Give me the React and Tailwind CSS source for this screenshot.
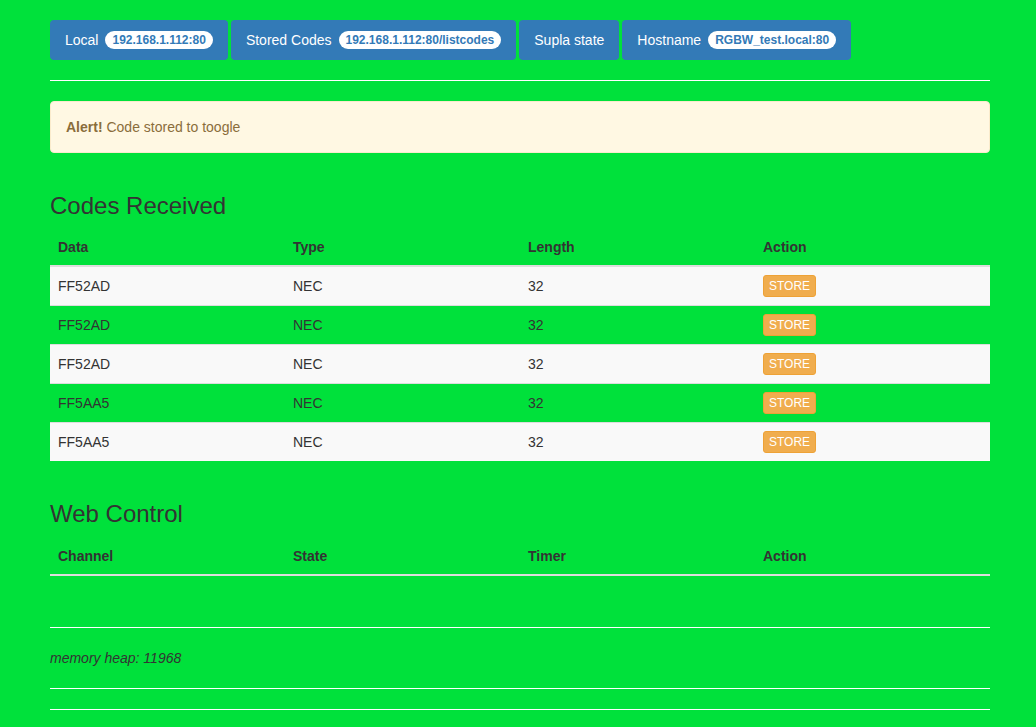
const links = [
  { label: "Local", badge: "192.168.1.112:80" },
  { label: "Stored Codes", badge: "192.168.1.112:80/listcodes" },
  { label: "Supla state" },
  { label: "Hostname", badge: "RGBW_test.local:80" },
];

const codes = [
  { data: "FF52AD", type: "NEC", len: 32 },
  { data: "FF52AD", type: "NEC", len: 32 },
  { data: "FF52AD", type: "NEC", len: 32 },
  { data: "FF5AA5", type: "NEC", len: 32 },
  { data: "FF5AA5", type: "NEC", len: 32 },
];

function Head({ cols }) {
  return (
    <thead>
      <tr>
        {cols.map((c) => (
          <th key={c} className="w-1/4 text-left font-bold px-2 py-2 leading-5 border-b-2 border-[#ddd]">
            {c}
          </th>
        ))}
      </tr>
    </thead>
  );
}

export default function App() {
  return (
    <div className="min-h-[727px] bg-[#00e13b] text-[#333] text-[14px] leading-5" style={{ fontFamily: '"Liberation Sans", Arial, sans-serif' }}>
      <div className="w-[940px] ml-[50px] pt-5 pb-5">
        <ul className="flex gap-[3px]">
          {links.map((l) => (
            <li key={l.label}>
              <a className="flex items-center gap-[7px] h-10 px-[15px] rounded bg-[#337ab7] text-white">
                {l.label}
                {l.badge && (
                  <span className="bg-white text-[#337ab7] text-[12px] font-bold leading-3 px-[7px] py-[3px] rounded-[10px]">
                    {l.badge}
                  </span>
                )}
              </a>
            </li>
          ))}
        </ul>

        <hr className="my-5 border-t border-white" />

        <div className="bg-[#fff8e3] border border-[#faebcc] text-[#8a6d3b] rounded p-[15px] mb-5">
          <strong>Alert!</strong> Code stored to toogle
        </div>

        <h3 className="text-[24px] leading-[1.1] mt-10 mb-[10px]">Codes Received</h3>
        <table className="w-full table-fixed border-collapse mb-5">
          <Head cols={["Data", "Type", "Length", "Action"]} />
          <tbody>
            {codes.map((c, i) => (
              <tr key={i} className={i % 2 === 0 ? "bg-[#f9f9f9]" : ""}>
                <td className="px-2 py-2 border-t border-[#ddd] align-middle">{c.data}</td>
                <td className="px-2 py-2 border-t border-[#ddd] align-middle">{c.type}</td>
                <td className="px-2 py-2 border-t border-[#ddd] align-middle">{c.len}</td>
                <td className="px-2 py-2 border-t border-[#ddd] align-middle">
                  <button className="bg-[#f0ad4e] border border-[#eea236] text-white text-[12px] leading-[18px] px-[5px] py-px rounded-[3px]">
                    STORE
                  </button>
                </td>
              </tr>
            ))}
          </tbody>
        </table>

        <h3 className="text-[24px] leading-[1.1] mt-10 mb-[10px]">Web Control</h3>
        <table className="w-full table-fixed border-collapse mb-5">
          <Head cols={["Channel", "State", "Timer", "Action"]} />
          <tbody />
        </table>

        <hr className="mt-[51px] mb-5 border-t border-white" />
        <p className="italic mb-[10px]">memory heap: 11968</p>
        <hr className="my-5 border-t border-white" />
        <hr className="my-5 border-t border-white" />
      </div>
    </div>
  );
}
